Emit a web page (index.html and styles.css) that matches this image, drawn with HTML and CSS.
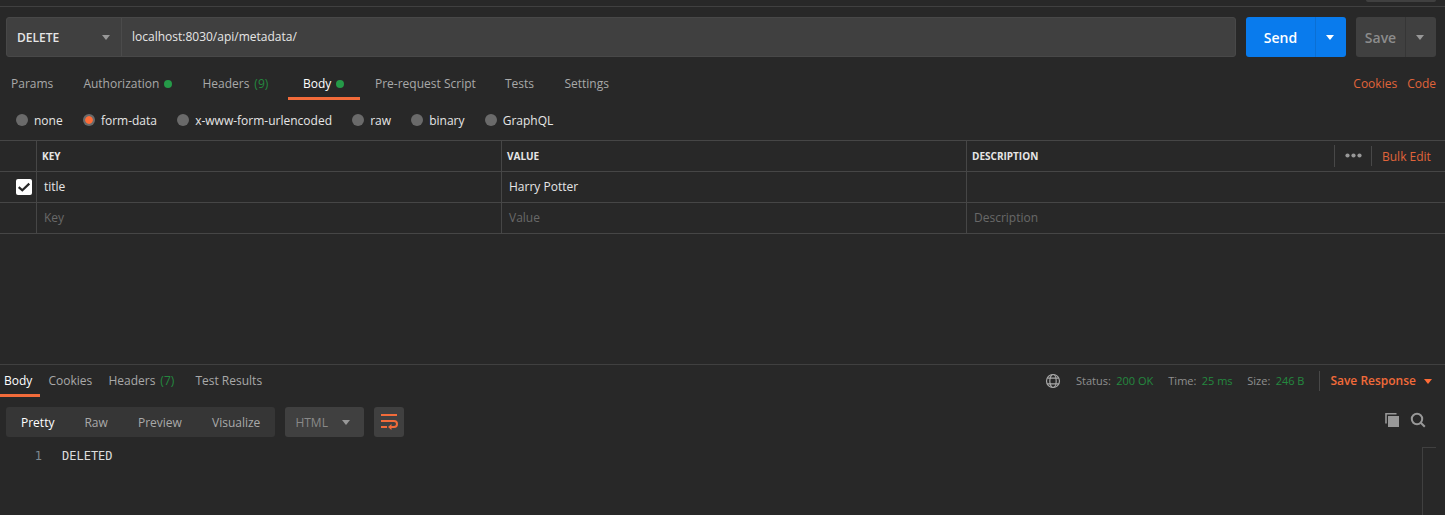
FILE: index.html
```html
<!DOCTYPE html>
<html lang="en">
<head>
<meta charset="utf-8">
<title>Request</title>
<link rel="stylesheet" href="styles.css">
</head>
<body>
<header class="topbar"><div class="topbar-btn"></div></header>
<section class="request">
  <div class="url-row">
    <div class="url-box">
      <div class="method"><span>DELETE</span><i class="caret"></i></div>
      <div class="url">localhost:8030/api/metadata/</div>
    </div>
    <div class="split send"><span class="split-label">Send</span><span class="split-more"><i class="caret"></i></span></div>
    <div class="split save"><span class="split-label">Save</span><span class="split-more"><i class="caret"></i></span></div>
  </div>
  <nav class="tabs">
    <div class="tab-list">
      <a class="tab">Params</a>
      <a class="tab">Authorization<i class="dot"></i></a>
      <a class="tab">Headers<span class="count">(9)</span></a>
      <a class="tab active">Body<i class="dot"></i></a>
      <a class="tab">Pre-request Script</a>
      <a class="tab">Tests</a>
      <a class="tab">Settings</a>
    </div>
    <div class="links"><a>Cookies</a><a>Code</a></div>
  </nav>
  <div class="modes">
    <label class="mode"><i class="radio"></i><span>none</span></label>
    <label class="mode"><i class="radio on"></i><span>form-data</span></label>
    <label class="mode"><i class="radio"></i><span>x-www-form-urlencoded</span></label>
    <label class="mode"><i class="radio"></i><span>raw</span></label>
    <label class="mode"><i class="radio"></i><span>binary</span></label>
    <label class="mode"><i class="radio"></i><span>GraphQL</span></label>
  </div>
  <div class="table">
    <div class="row head">
      <div class="cell check"></div>
      <div class="cell">KEY</div>
      <div class="cell">VALUE</div>
      <div class="cell last">DESCRIPTION
        <div class="table-tools">
          <span class="more"><svg width="17" height="5" viewBox="0 0 17 5" fill="#989898"><circle cx="2.5" cy="2.5" r="2.1"/><circle cx="8.5" cy="2.5" r="2.1"/><circle cx="14.5" cy="2.5" r="2.1"/></svg></span>
          <span class="bulk">Bulk Edit</span>
        </div>
      </div>
    </div>
    <div class="row">
      <div class="cell check"><span class="checkbox"><svg width="16" height="16" viewBox="0 0 16 16" fill="none" stroke="#282828" stroke-width="2.2"><path d="M2.7 8.2 6.3 11.3 13.3 4.6"/></svg></span></div>
      <div class="cell">title</div>
      <div class="cell">Harry Potter</div>
      <div class="cell last"></div>
    </div>
    <div class="row hint">
      <div class="cell check"></div>
      <div class="cell">Key</div>
      <div class="cell">Value</div>
      <div class="cell last">Description</div>
    </div>
  </div>
</section>
<section class="response">
  <div class="response-head">
    <nav class="response-tabs">
      <a class="rtab active">Body</a>
      <a class="rtab">Cookies</a>
      <a class="rtab">Headers<span class="count">(7)</span></a>
      <a class="rtab">Test Results</a>
    </nav>
    <div class="meta">
      <svg class="globe" width="16" height="16" viewBox="0 0 16 16" fill="none" stroke="#a8a8a8" stroke-width="1.2"><circle cx="8" cy="8" r="6.5"/><ellipse cx="8" cy="8" rx="3.2" ry="6.5"/><path d="M2.4 5.2h11.2M2.4 10.8h11.2"/></svg>
      <span class="stat status">Status:<b>200 OK</b></span>
      <span class="stat time">Time:<b>25 ms</b></span>
      <span class="stat size">Size:<b>246 B</b></span>
      <span class="save-response">Save Response<i class="caret"></i></span>
    </div>
  </div>
  <div class="toolbar">
    <div class="views">
      <span class="view active">Pretty</span>
      <span class="view">Raw</span>
      <span class="view">Preview</span>
      <span class="view">Visualize</span>
    </div>
    <div class="format"><span>HTML</span><i class="caret"></i></div>
    <div class="wrap"><svg width="18" height="18" viewBox="0 0 18 18" fill="none" stroke="#f26b3a" stroke-width="2"><path d="M1 2h16M1 8h13a2.9 2.9 0 0 1 0 6H10M1 14h6"/><path d="M11.5 11v6l-3.5-3z" fill="#f26b3a" stroke="none"/></svg></div>
    <div class="tools">
      <svg width="16" height="16" viewBox="0 0 16 16"><path d="M2 11.5V1.8h10.5" fill="none" stroke="#989898" stroke-width="1.6"/><path d="M4 4H15V15H4z" fill="#989898"/></svg>
      <svg width="16" height="16" viewBox="0 0 16 16" fill="none" stroke="#989898" stroke-width="2"><circle cx="7" cy="7" r="5.2"/><path d="m10.8 10.8 4 4"/></svg>
    </div>
  </div>
  <div class="code">
    <span class="line-no">1</span><code>DELETED</code>
    <div class="minimap"></div>
  </div>
</section>
</body>
</html>
```
FILE: styles.css
```css
* { box-sizing: border-box; }
body {
  margin: 0;
  width: 1445px;
  height: 515px;
  overflow: hidden;
  display: flex;
  flex-direction: column;
  background: #282828;
  color: #e6e6e6;
  font: 12px/16px "Open Sans", "Noto Sans", sans-serif;
}
.topbar { height: 7px; border-bottom: 1px solid #404040; display: flex; justify-content: flex-end; padding-right: 9px; }
.topbar-btn { width: 70px; height: 2px; background: #404040; border-radius: 0 0 3px 3px; }
.request { height: 357px; padding-top: 10px; }
.caret { display: block; width: 0; height: 0; border: 4px solid transparent; border-top: 5px solid #989898; border-bottom: 0; }

.url-row { display: flex; gap: 10px; padding: 0 9px 0 6px; }
.url-box { flex: 1; height: 40px; display: flex; background: #404040; border: 1px solid #484848; border-radius: 3px; }
.method { width: 115px; padding: 2px 11px 0 10px; display: flex; align-items: center; justify-content: space-between; font-weight: 600; border-right: 1px solid #4b4b4b; }
.method .caret { margin-bottom: 2px; }
.url { padding: 11px 10px; }
.split { height: 40px; display: flex; border-radius: 3px; font-size: 14px; font-weight: 600; }
.split-label { display: flex; align-items: center; justify-content: center; padding-top: 2px; }
.split-more { flex: 1; display: flex; align-items: center; justify-content: center; padding-right: 2px; }
.send { width: 100px; background: #097bed; color: #fff; }
.send .split-label { width: 69px; }
.send .split-more { border-left: 1px solid #0a6fd4; }
.send .caret { border-top-color: #fff; }
.save { width: 80px; background: #404040; color: #8c8c8c; }
.save .split-label { width: 49px; }
.save .split-more { border-left: 1px solid #363636; }

.tabs { display: flex; justify-content: space-between; height: 43px; padding: 10px 9px 0 0; }
.tab-list { display: grid; grid-template-columns: 72.4px 119px 100.6px 72px 130px 59.4px 75px; margin-left: -4px; }
.tab { display: flex; align-items: center; height: 33px; padding: 3px 0 0 15px; color: #a9a9a9; white-space: nowrap; border-bottom: 3px solid transparent; }
.active { color: #fff; }
.tab.active, .rtab.active { border-bottom-color: #f26b3a; }
.dot { width: 8px; height: 8px; margin-left: 5px; border-radius: 50%; background: #259a48; }
.count { margin-left: 5px; color: #24893f; }
.links { display: flex; gap: 10px; padding-top: 9px; color: #e0643a; }

.modes { display: flex; height: 40px; align-items: center; padding-left: 16px; gap: 20.2px; }
.mode { display: flex; align-items: center; gap: 6px; white-space: nowrap; }
.mode span { padding-top: 2px; }
.radio { width: 12px; height: 12px; border-radius: 50%; background: #6a6a6a; }
.radio.on { background: radial-gradient(circle, #ff6c37 3.4px, #6a6a6a 4.2px); }

.table { border-top: 1px solid #464646; }
.row { display: grid; grid-template-columns: 37px 465px 465px 1fr; height: 31px; border-bottom: 1px solid #464646; }
.cell { display: flex; align-items: center; padding-left: 7px; border-right: 1px solid #464646; }
.cell.last { border-right: 0; }
.head .cell { padding-left: 5px; font-size: 10px; font-weight: 700; }
.hint { color: #696969; }
.row .check { padding: 0 4px 0 0; justify-content: flex-end; }
.checkbox { width: 16px; height: 16px; border-radius: 2px; background: #fff; }
.checkbox svg { display: block; }
.table-tools { display: flex; align-items: center; margin-left: auto; font-size: 12px; font-weight: 400; }
.more { width: 37px; height: 22px; padding: 8px 0 0 10px; border-left: 1px solid #484848; line-height: 0; }
.bulk { width: 74px; padding: 3px 0 1px 10px; color: #e0643a; border-left: 1px solid #484848; white-space: nowrap; }

.response { height: 151px; border-top: 1px solid #404040; }
.response-head { display: flex; height: 42px; justify-content: space-between; }
.response-tabs { display: grid; grid-template-columns: 40.4px 60px 87px 83px; }
.rtab { display: flex; height: 32px; padding: 8px 0 0 8px; color: #a9a9a9; white-space: nowrap; border-bottom: 3px solid transparent; }
.rtab.active { padding-left: 4px; color: #fff; }
.meta { display: flex; height: 32px; align-items: center; font-size: 11px; color: #8f8f8f; }
.globe { margin-right: 15px; }
.stat { display: flex; white-space: nowrap; }
.stat b { margin-left: 5.3px; color: #24893f; font-weight: 400; }
.status { width: 92.3px; }
.time { width: 79px; }
.size { width: 71.7px; }
.save-response { display: flex; align-items: center; justify-content: space-between; width: 126px; height: 20px; padding: 0 13px 0 10.4px; font-size: 12px; font-weight: 600; color: #f26b3a; border-left: 1px solid #484848; white-space: nowrap; }
.save-response .caret { border-top-color: #ff6c37; }

.toolbar { display: flex; height: 30px; padding: 0 19px 0 6px; gap: 10px; }
.views { width: 269px; display: grid; grid-template-columns: 63.4px 53.6px 74px 1fr; padding: 2px 0 0 15px; align-items: center; background: #363636; border-radius: 3px; color: #a9a9a9; }
.views .active { color: #fff; }
.format { width: 79px; display: flex; align-items: center; justify-content: space-between; padding: 0 14px 0 10.4px; background: #404040; border-radius: 3px; color: #898989; }
.format span { padding-top: 2px; }
.wrap { width: 30px; display: flex; align-items: center; justify-content: center; background: #404040; border-radius: 3px; }
.tools { margin-left: auto; display: flex; gap: 10px; padding-top: 5px; }

.code { display: flex; height: 78px; padding-top: 10px; font: 12px/18px "DejaVu Sans Mono", monospace; }
.line-no { width: 62px; padding-right: 20px; text-align: right; color: #7e8a91; }
.code code { font: inherit; color: #dcdcdc; }
.minimap { width: 14px; margin: 0 9px 0 auto; border-top: 1px solid #404040; border-left: 1px solid #404040; }
```
